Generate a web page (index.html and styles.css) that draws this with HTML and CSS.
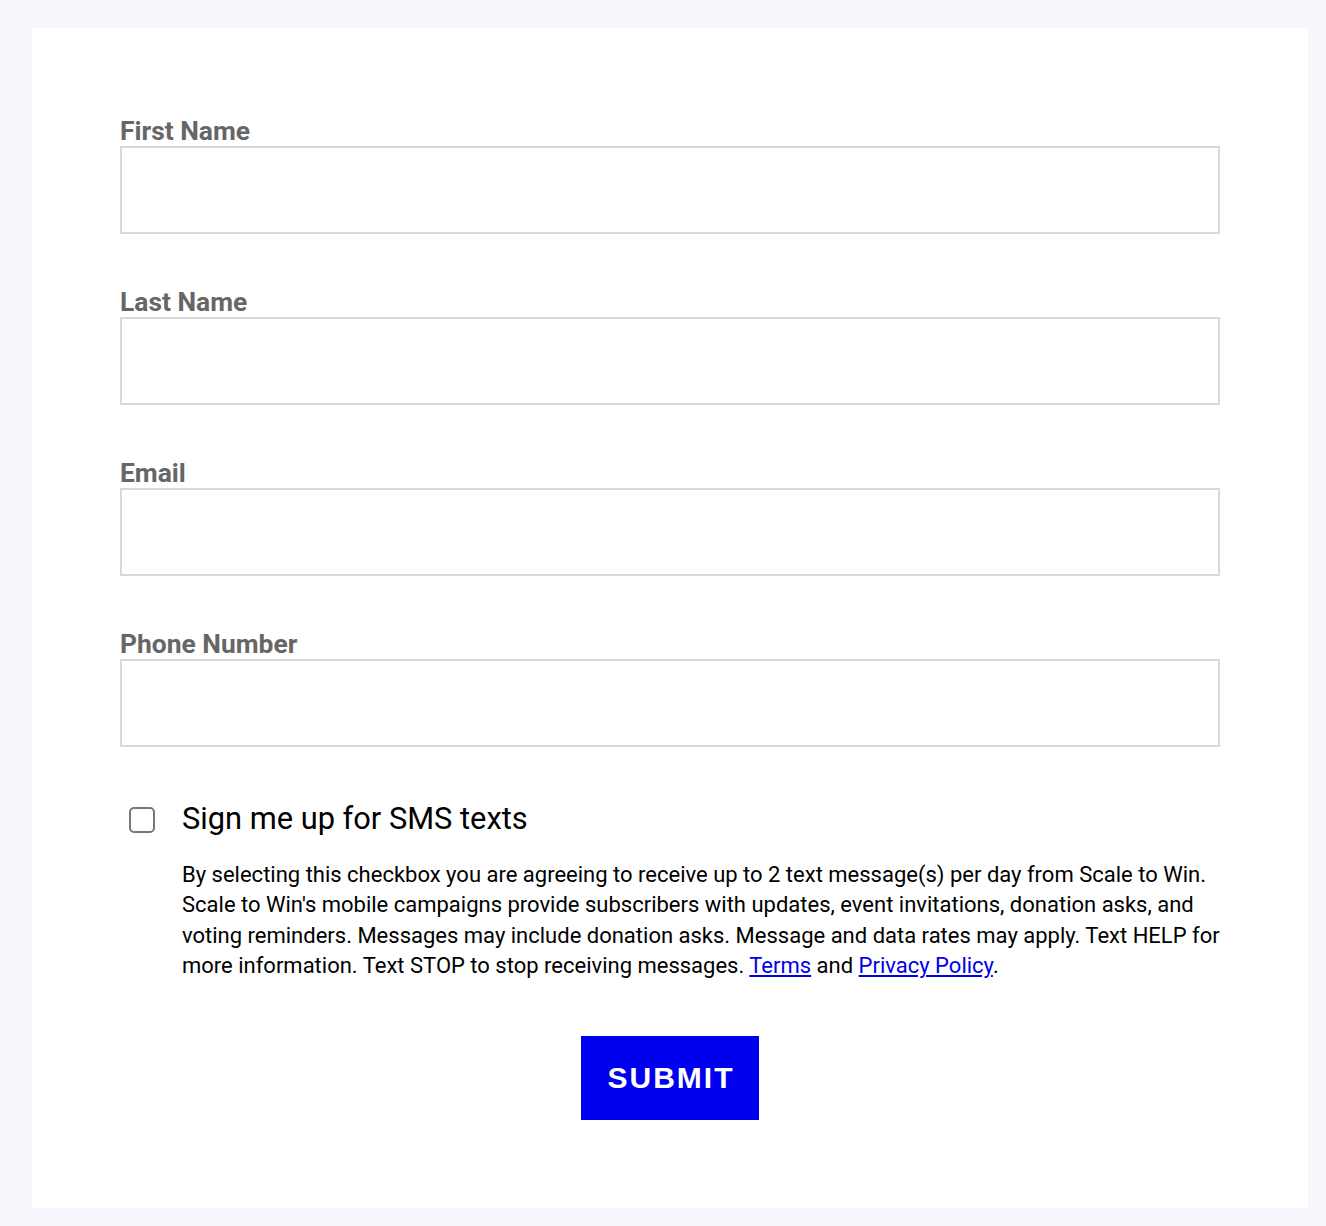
FILE: index.html
```html
<!DOCTYPE html>
<html lang="en">
<head>
<meta charset="utf-8">
<title>Sign up</title>
<link rel="stylesheet" href="styles.css">
</head>
<body>
<div class="page">
  <form class="card">
    <div class="field">
      <label class="label" for="fn">First Name</label>
      <input class="input" id="fn" type="text">
    </div>
    <div class="field">
      <label class="label" for="ln">Last Name</label>
      <input class="input" id="ln" type="text">
    </div>
    <div class="field">
      <label class="label" for="em">Email</label>
      <input class="input" id="em" type="email">
    </div>
    <div class="field">
      <label class="label" for="ph">Phone Number</label>
      <input class="input" id="ph" type="tel">
    </div>
    <div class="sms">
      <span class="checkbox"></span>
      <div class="sms-body">
        <div class="sms-title">Sign me up for SMS texts</div>
        <p class="sms-text">By selecting this checkbox you are agreeing to receive up to 2 text message(s) per day from Scale to Win. Scale to Win's mobile campaigns provide subscribers with updates, event invitations, donation asks, and voting reminders. Messages may include donation asks. Message and data rates may apply. Text HELP for more information. Text STOP to stop receiving messages. <a href="#">Terms</a> and <a href="#">Privacy Policy</a>.</p>
      </div>
    </div>
    <div class="actions">
      <button class="submit" type="button">SUBMIT</button>
    </div>
  </form>
</div>
</body>
</html>
```
FILE: styles.css
```css
html, body {
  margin: 0;
  padding: 0;
  background: #f6f7fc;
}
.page {
  padding: 28px 18px 18px 32px;
}
.card {
  background: #ffffff;
  padding: 89px 88px 88px 88px;
  font-family: Roboto, "Liberation Sans", sans-serif;
}
.field {
  display: flex;
  flex-direction: column;
  margin-bottom: 54px;
}
.label {
  font-size: 26.4px;
  line-height: 29px;
  font-weight: 700;
  color: #666666;
}
.input {
  box-sizing: border-box;
  height: 88px;
  width: 100%;
  border: 2px solid #d9d9d9;
  border-radius: 0;
  background: #fff;
  margin: 0;
  padding: 0 16px;
  font: inherit;
}
.sms {
  display: flex;
  align-items: flex-start;
  margin-top: 1px;
  padding-left: 9px;
}
.checkbox {
  box-sizing: border-box;
  flex: none;
  width: 26px;
  height: 26px;
  margin-top: 6px;
  border: 2px solid #777777;
  border-radius: 5px;
  background: #fff;
}
.sms-body {
  margin-left: 27px;
  flex: 1;
}
.sms-title {
  font-size: 30.8px;
  line-height: 36px;
  color: #000;
}
.sms-text {
  margin: 23px 0 0 0;
  font-size: 22px;
  line-height: 30.4px;
  color: #000;
}
.sms-text a {
  color: #0000ee;
}
.actions {
  display: flex;
  justify-content: center;
  margin-top: 54px;
}
.submit {
  background: #0000f0;
  color: #ffffff;
  border: none;
  border-radius: 0;
  height: 84px;
  width: 178px;
  padding: 0 0 0 2px;
  font-family: "Liberation Sans", Arial, sans-serif;
  font-weight: 700;
  font-size: 30px;
  letter-spacing: 2px;
  cursor: pointer;
}
```
